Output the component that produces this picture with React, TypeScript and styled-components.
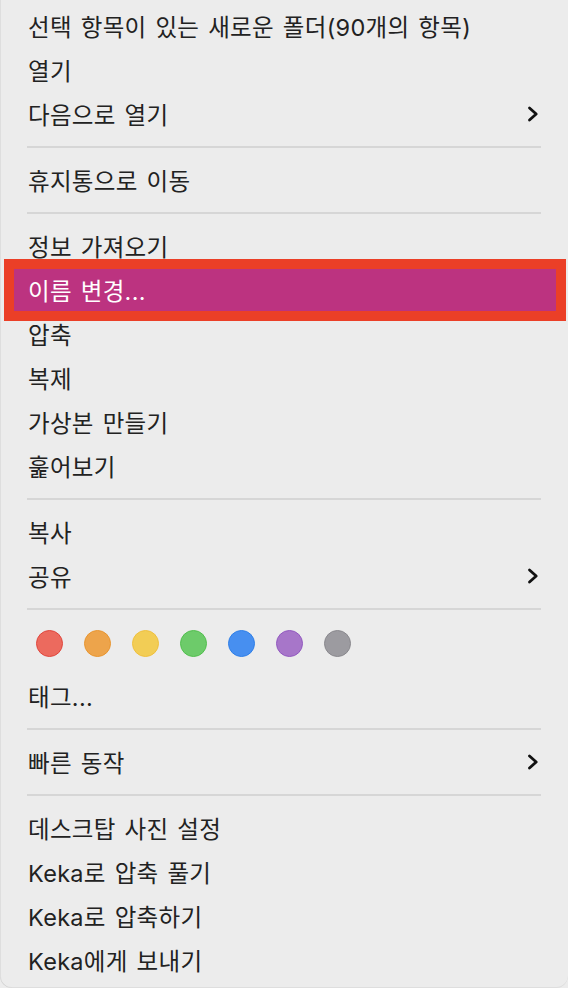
import styled, { createGlobalStyle } from "styled-components";

const GlobalStyle = createGlobalStyle`
  html, body {
    margin: 0;
    padding: 0;
    background: #ececec;
  }
  body {
    font-family: "Inter", "Noto Sans CJK KR", sans-serif;
    -webkit-font-smoothing: antialiased;
  }
`;

const Menu = styled.div`
  width: 568px;
  height: 988px;
  box-sizing: border-box;
  padding: 4px 0 6px;
  display: flex;
  flex-direction: column;
  background: #ececec;
  border-radius: 0 0 12px 12px;
  box-shadow: inset 1px 0 0 rgba(0, 0, 0, 0.06), inset 0 -1px 0 rgba(0, 0, 0, 0.06);
`;

const Item = styled.div<{ $active?: boolean }>`
  height: 44px;
  display: flex;
  align-items: center;
  justify-content: space-between;
  box-sizing: border-box;
  padding: 0 29px 0 28px;
  font-size: 23.5px;
  word-spacing: 2px;
  letter-spacing: 0.3px;
  color: ${(p) => (p.$active ? "#ffffff" : "#222222")};

  ${(p) =>
    p.$active &&
    `
    margin: 1px 12px 1px 14px;
    height: 42px;
    padding-left: 14px;
    background: #bc3380;
    outline: 10px solid #eb3f27;
  `}
`;

const Label = styled.span`
  white-space: nowrap;
`;

const Separator = styled.div`
  height: 22px;
  display: flex;
  align-items: center;
  padding: 0 27px;

  &::after {
    content: "";
    flex: 1;
    height: 2px;
    background: #d6d6d6;
  }
`;

const ColorRow = styled.div`
  height: 54px;
  display: flex;
  align-items: flex-start;
  gap: 21px;
  padding: 10px 0 0 36px;
  box-sizing: border-box;
`;

const Dot = styled.span<{ $fill: string; $edge: string }>`
  width: 27px;
  height: 27px;
  border-radius: 50%;
  box-sizing: border-box;
  background: ${(p) => p.$fill};
  border: 1.5px solid ${(p) => p.$edge};
`;

const Chevron = () => (
  <svg width="12" height="16" viewBox="0 0 12 16" fill="none">
    <path
      d="M2.5 2 L9.2 8 L2.5 14"
      stroke="#111"
      strokeWidth="2.8"
      strokeLinecap="round"
      strokeLinejoin="round"
    />
  </svg>
);

const tags = [
  { fill: "#ec6a5e", edge: "#e0463d" },
  { fill: "#eda44b", edge: "#e8952f" },
  { fill: "#f2cd55", edge: "#efc03e" },
  { fill: "#6dcb6a", edge: "#52bf4e" },
  { fill: "#478ff0", edge: "#2f7fe8" },
  { fill: "#a776c9", edge: "#9259c0" },
  { fill: "#9c9ba0", edge: "#89888d" },
];

type Entry =
  | { kind: "item"; label: string; submenu?: boolean; active?: boolean }
  | { kind: "sep" }
  | { kind: "tags" };

const entries: Entry[] = [
  { kind: "item", label: "선택 항목이 있는 새로운 폴더(90개의 항목)" },
  { kind: "item", label: "열기" },
  { kind: "item", label: "다음으로 열기", submenu: true },
  { kind: "sep" },
  { kind: "item", label: "휴지통으로 이동" },
  { kind: "sep" },
  { kind: "item", label: "정보 가져오기" },
  { kind: "item", label: "이름 변경...", active: true },
  { kind: "item", label: "압축" },
  { kind: "item", label: "복제" },
  { kind: "item", label: "가상본 만들기" },
  { kind: "item", label: "훑어보기" },
  { kind: "sep" },
  { kind: "item", label: "복사" },
  { kind: "item", label: "공유", submenu: true },
  { kind: "sep" },
  { kind: "tags" },
  { kind: "item", label: "태그..." },
  { kind: "sep" },
  { kind: "item", label: "빠른 동작", submenu: true },
  { kind: "sep" },
  { kind: "item", label: "데스크탑 사진 설정" },
  { kind: "item", label: "Keka로 압축 풀기" },
  { kind: "item", label: "Keka로 압축하기" },
  { kind: "item", label: "Keka에게 보내기" },
];

export default function App() {
  return (
    <>
      <GlobalStyle />
      <Menu>
        {entries.map((e, i) => {
          if (e.kind === "sep") return <Separator key={i} />;
          if (e.kind === "tags")
            return (
              <ColorRow key={i}>
                {tags.map((t) => (
                  <Dot key={t.fill} $fill={t.fill} $edge={t.edge} />
                ))}
              </ColorRow>
            );
          return (
            <Item key={i} $active={e.active}>
              <Label>{e.label}</Label>
              {e.submenu ? <Chevron /> : null}
            </Item>
          );
        })}
      </Menu>
    </>
  );
}
